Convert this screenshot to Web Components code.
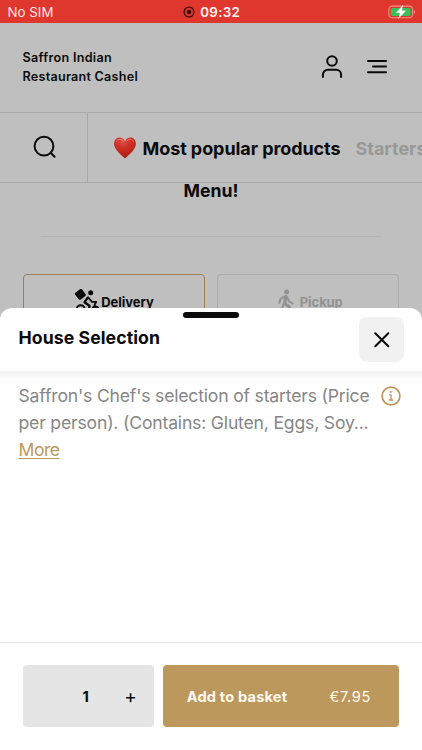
<!DOCTYPE html>
<html lang="en">
<head>
<meta charset="utf-8">
<title>Saffron Indian Restaurant Cashel</title>
<style>
html,body{margin:0;height:750px;overflow:hidden;background:#bfbfbf;font-family:Inter,"Liberation Sans",sans-serif;color:#0b0b0b}
</style>
</head>
<body>
<order-app></order-app>
<script>
const define = (name, html, extra) => customElements.define(name, class extends HTMLElement {
  constructor() {
    super();
    const t = document.createElement('template');
    t.innerHTML = html;
    this.attachShadow({mode: 'open'}).append(t.content.cloneNode(true));
  }
  connectedCallback() { if (extra) extra(this, this.shadowRoot); }
});

// A single line of text, tracked so that it occupies the width given in its "w" attribute.
define('text-line', `<style>:host{display:block;white-space:pre;flex:none}span{display:inline-block;text-decoration:inherit}</style><span><slot></slot></span>`,
  (el, root) => {
    const w = parseFloat(el.getAttribute('w'));
    const span = root.querySelector('span');
    if (!w) return;
    const natural = span.getBoundingClientRect().width;
    span.style.letterSpacing = ((w - natural) / el.textContent.length).toFixed(4) + 'px';
    el.style.width = w + 'px';
  });

define('status-bar', `<style>
:host{display:grid;grid-template-columns:1fr auto 1fr;align-items:center;height:23px;background:#df372d;color:#ffe9e6;padding:0 6px 0 7.5px;box-sizing:border-box;font-size:13.3px;line-height:24px}
.mid{display:flex;align-items:center;gap:5px;font-weight:600;color:#fff5f3}
.bat{justify-self:end}svg{display:block}
</style>
<text-line w="46">No SIM</text-line>
<div class="mid"><svg width="12" height="12" viewBox="0 0 12 12"><circle cx="6" cy="6" r="4.9" fill="none" stroke="#3a0805" stroke-width="1.2"/><circle cx="6" cy="6" r="2.3" fill="#3a0805"/></svg><text-line w="40">09:32</text-line></div>
<svg class="bat" width="28" height="14" viewBox="0 0 28 14"><rect x=".9" y="1.1" width="23.6" height="11.6" rx="3.2" fill="none" stroke="#f0918a" stroke-width="1.1"/><rect x="2.8" y="2.9" width="19.8" height="8" rx="1.7" fill="#3cbf58"/><path d="M25.8 5v4c1.8-.6 1.8-3.4 0-4z" fill="#f0918a"/><path d="M14.8.3 8.2 7.8h4l-1.7 5.7 7.2-7.8h-4z" fill="#fff" stroke="#fff" stroke-width=".3"/></svg>`);

define('site-header', `<style>
:host{display:flex;height:90px;box-sizing:border-box;align-items:center;justify-content:space-between;padding:0 34px 1px 22.5px;border-bottom:1px solid #aaa;font-size:12.6px;font-weight:600;line-height:19px}
.icons{display:flex;align-items:center;gap:23px}svg{display:block}
</style>
<div><text-line w="89.5">Saffron Indian</text-line><text-line w="115.5">Restaurant Cashel</text-line></div>
<div class="icons">
<svg width="22" height="24" viewBox="0 0 22 24" fill="none" stroke="#0b0b0b" stroke-width="2" stroke-linecap="round"><circle cx="11" cy="6" r="4.8"/><path d="M1.9 22v-2.2a5 5 0 0 1 5-5h8.2a5 5 0 0 1 5 5V22"/></svg>
<svg width="22" height="24" viewBox="0 0 22 24" fill="none" stroke="#0b0b0b" stroke-width="2" stroke-linecap="round"><path d="M2 6h18M7 11.6h13M2 17.2h18"/></svg>
</div>`);

define('category-nav', `<style>
:host{display:flex;height:70px;box-sizing:border-box;border-bottom:1px solid #aaa;overflow:hidden;font-size:18px;font-weight:650;line-height:24px}
.search{width:88px;flex:none;box-sizing:border-box;border-right:1px solid #aaa;display:flex;align-items:center;justify-content:center;padding:0 0 1px 3px}
.tabs{display:flex;align-items:center;padding:2px 0 0 25px;min-width:0;flex:1;overflow:hidden}
.heart{margin:-2px 5.5px 0 0}.off{color:#989898;margin-left:15px}svg{display:block;flex:none}
</style>
<div class="search"><svg width="24" height="24" viewBox="0 0 24 24" fill="none" stroke="#0b0b0b" stroke-width="2" stroke-linecap="round"><circle cx="11" cy="11.2" r="9.4"/><path d="m17.6 17.8 4 4"/></svg></div>
<div class="tabs"><svg class="heart" width="24" height="22" viewBox="0 0 24 22"><defs><radialGradient id="g" cx=".4" cy=".15" r=".9"><stop offset="0" stop-color="#dc5548"/><stop offset=".4" stop-color="#cf2f25"/><stop offset="1" stop-color="#a81b14"/></radialGradient></defs><path d="M12 4.2C10.7 1.6 8.7.6 6.6.6 3.4.6 1.1 3.2 1.1 6.8c0 5.3 5.2 9.5 10.9 14.6 5.7-5.1 10.9-9.3 10.9-14.6 0-3.6-2.3-6.2-5.5-6.2-2.1 0-4.1 1-5.4 3.6z" fill="url(#g)"/><path d="M3.3 4.5c1.3-2.6 4.6-2.7 6.3-1M14.5 3.5c1.9-1.8 5-1.4 6.2 1" fill="none" stroke="#ef9a91" stroke-width=".9" stroke-linecap="round" opacity=".7"/></svg>
<text-line w="198">Most popular products</text-line><text-line class="off" w="71">Starters</text-line></div>`);

define('order-mode', `<style>
:host{display:flex;justify-content:center;gap:2px;padding-top:14px;min-width:0;height:60px;box-sizing:border-box;border:1.5px solid #aeaeae;border-radius:4px;color:#929292;font-size:13px;font-weight:650;line-height:26px}
:host([active]){border-color:#a17d4e;color:#0b0b0b}
:host(:not([active])){gap:3.5px;padding-left:4px}
</style><slot name="icon"></slot><slot></slot>`);

define('menu-page', `<style>
:host{display:block;height:140px}
h2{margin:-4px 0 0;font-size:17.7px;font-weight:650;line-height:24px;display:flex;justify-content:center}
hr{margin:33px 41px 0;border:0;height:1px;background:#b4b4b4}
.modes{display:grid;grid-template-columns:1fr 1fr;gap:12px;padding:37px 23px 0}
svg{display:block}
</style>
<h2><text-line w="55">Menu!</text-line></h2><hr>
<div class="modes">
<order-mode active><svg slot="icon" width="25" height="25" viewBox="0 0 25 25" fill="none" stroke="#0b0b0b" stroke-linecap="round" stroke-linejoin="round"><rect x="2.7" y="1.8" width="7.2" height="7.2" rx="1" transform="rotate(-36 6.3 5.3)" fill="#0b0b0b" stroke-width="1.5"/><circle cx="16.7" cy="3.7" r="2.5" fill="#0b0b0b" stroke="none"/><path d="m13.8 8.6-3.3 4.6 5 3.6-.8 6" stroke-width="2.3"/><path d="m14.3 8.5 3.7 4.3h4.2l-1.7 3.2 2.3 5" stroke-width="1.8"/><circle cx="6.7" cy="20.3" r="4" stroke-width="2"/><circle cx="21.5" cy="20.5" r="3" stroke-width="2"/></svg><text-line w="52.5">Delivery</text-line></order-mode>
<order-mode><svg slot="icon" width="19" height="24" viewBox="0 0 19 24" fill="none" stroke="#929292" stroke-linecap="round" stroke-linejoin="round"><circle cx="9.7" cy="3" r="2.5" fill="#929292" stroke="none"/><path d="M8.9 7.6 7.5 14.3l4.5 3.2.7 5" stroke-width="3.2"/><path d="M8.7 7.2 3.7 9.5 2.3 14M10 8l2 4.3 3.5 2.2M6.5 15.5 5.3 18.8 2.5 22" stroke-width="2"/></svg><text-line w="43">Pickup</text-line></order-mode>
</div>`);

define('sheet-header', `<style>
:host{display:block;height:63px;position:relative;background:#fff;border-radius:12px 12px 0 0}
.row{display:flex;justify-content:space-between;height:63px;box-sizing:border-box;padding:9px 18px 0 18.5px;font-size:17.7px;font-weight:650;line-height:42px}
.grab{position:absolute;left:183px;top:4px;width:56px;height:6px;border-radius:3px;background:#0b0b0b}
.close{width:45px;height:45px;border-radius:8px;background:#f1f1f1;display:flex;align-items:center;justify-content:center}
svg{display:block}
</style><div class="grab"></div><div class="row"><text-line w="141.5">House Selection</text-line>
<div class="close"><svg width="16" height="16" viewBox="0 0 16 16" stroke="#0b0b0b" stroke-width="2" stroke-linecap="round"><path d="m1.3 1.3 13 13M14.3 1.3l-13 13"/></svg></div></div>`);

define('item-description', `<style>
:host{display:flex;justify-content:space-between;box-sizing:border-box;height:271px;padding:11px 21.5px 0 18.5px;background:linear-gradient(#f1f1f1,#fbfbfb 7px,#fff 14px);font-size:17.6px;line-height:27px;color:#868686}
.more{color:#bd985c;text-decoration:underline;text-decoration-thickness:1px;text-underline-offset:2px}svg{display:block;margin-top:4px}
</style><div><text-line w="351">Saffron's Chef's selection of starters (Price</text-line><text-line w="350">per person). (Contains: Gluten, Eggs, Soy...</text-line><text-line class="more" w="41">More</text-line></div>
<svg width="20" height="20" viewBox="0 0 20 20"><circle cx="10" cy="10" r="8.9" fill="none" stroke="#c39656" stroke-width="1.7"/><circle cx="9.7" cy="6" r="1.1" fill="#c39656"/><path d="M8 8.8h2v5M7.7 14h4.4" fill="none" stroke="#c39656" stroke-width="1.3"/></svg>`);

define('basket-bar', `<style>
:host{display:flex;box-sizing:border-box;height:108px;padding:22.4px 23px 0;gap:9.4px;border-top:1px solid #e1e1e1;background:#fff;font-size:14.6px;line-height:24px}
div{height:62px;border-radius:4px;display:flex;align-items:center;box-sizing:border-box}
.qty{width:130.8px;background:#e5e5e5;font-weight:700;padding:1px 17px 0 59.5px;justify-content:space-between}
.add{flex:1;background:#bd985c;color:#fffaf0;padding:1px 28px 0 23.5px;justify-content:space-between}
.b{font-weight:650}
.plus{font-weight:400;font-size:19px}
</style><div class="qty"><text-line w="9">1</text-line><text-line class="plus" w="12.5">+</text-line></div>
<div class="add"><text-line class="b" w="100.5">Add to basket</text-line><text-line w="41.5">€7.95</text-line></div>`);

define('order-app', `<style>:host{display:block;width:422px;height:750px;overflow:hidden;position:relative}
.sheet{position:absolute;left:0;right:0;top:308px;bottom:0}</style>
<status-bar></status-bar><site-header></site-header><category-nav></category-nav><menu-page></menu-page>
<div class="sheet"><sheet-header></sheet-header><item-description></item-description><basket-bar></basket-bar></div>`);
</script>
</body>
</html>
